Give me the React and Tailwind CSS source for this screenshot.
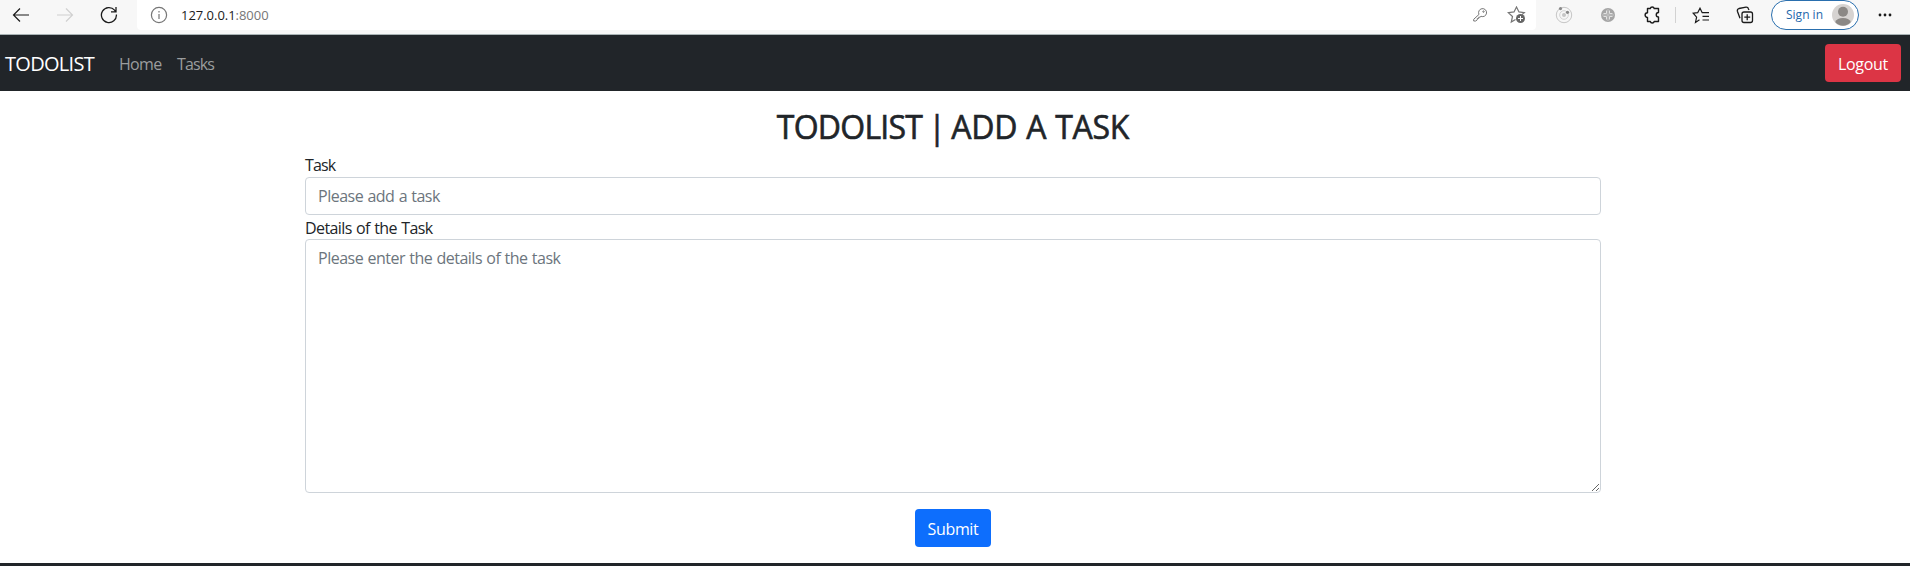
const svgProps = { fill: 'none', stroke: 'currentColor', strokeWidth: 1.2 };

function Slot({ children, className = '' }) {
  return <div className={`flex h-[30px] w-11 shrink-0 items-center justify-center ${className}`}>{children}</div>;
}

function BrowserBar() {
  return (
    <header className="flex h-[35px] w-full items-start border-b border-[#a9b3b5] bg-[#f7f7f7] text-[#1b1b1b]">
      <Slot className="-ml-px">
        <svg {...svgProps} width="18" height="16" viewBox="0 0 18 16"><path d="M17 8H1.5M8 1.5L1.5 8L8 14.5" /></svg>
      </Slot>
      <Slot className="text-[#d0d0d0]">
        <svg {...svgProps} width="18" height="16" viewBox="0 0 18 16"><path d="M1 8H16.5M10 1.5L16.5 8L10 14.5" /></svg>
      </Slot>
      <Slot>
        <svg {...svgProps} strokeWidth="1.3" width="18" height="18" viewBox="0 0 18 18"><path d="M16.4 8.5A7.5 7.5 0 1 1 14.6 4.2L16 5.6M16 1V5.8H11" /></svg>
      </Slot>
      <div className="ml-[6px] flex h-[30px] w-[1399px] shrink-0 items-center rounded-b-[4px] bg-white text-[#767676]">
        <svg {...svgProps} className="ml-[13px]" width="18" height="18" viewBox="0 0 18 18"><circle cx="9" cy="9" r="7.6" /><path d="M9 8V13M9 5V6.4" /></svg>
        <span className="ml-[13px] text-[13px] tracking-[-0.03px]"><span className="text-[#1b1b1b]">127.0.0.1</span>:8000</span>
        <svg {...svgProps} strokeWidth="1" className="ml-auto" width="16" height="16" viewBox="0 0 16 16"><path d="M7 7.4A4 4 0 1 1 9 9.3L8 10.2H6.7V11.5H5.3V12.8L3.7 14H1.7V12.3L7 7.4Z" /><circle cx="11.5" cy="4.6" r=".7" /></svg>
        <svg {...svgProps} className="ml-[19px] mr-[10px]" width="19" height="18" viewBox="0 0 19 18"><path d="M8.5 13.4L4.3 16L5.5 10.5L1.3 6.6L7 5.9L9.5 1L12 5.9L17.3 6.6L15 8.6" /><circle cx="13.5" cy="12.5" r="4.5" fill="#666" stroke="none" /><path stroke="#fff" strokeWidth="1" d="M13.5 10V15M11 12.5H16" /></svg>
      </div>
      <Slot className="ml-[6px]">
        <svg width="18" height="18" viewBox="0 0 18 18" fill="none" stroke="#c6c6c6"><circle cx="9" cy="9" r="7.7" /><circle cx="9" cy="9" r="4.3" stroke="#d4d4d4" /><circle cx="9" cy="9" r="2" fill="#c6c6c6" stroke="none" /><circle cx="5.5" cy="2.6" r="1.6" fill="#888" stroke="none" /><circle cx="12.5" cy="6.3" r="1.6" fill="#888" stroke="none" /></svg>
      </Slot>
      <Slot>
        <svg width="16" height="16" viewBox="0 0 16 16" fill="none"><circle cx="8" cy="8" r="7" fill="#a5a5a5" /><path d="M8 2V14M2 8H14" stroke="#c4c4c4" /><path d="M6.5 3.5V6.5H3.5M9.5 3.5V6.5H12.5M6.5 12.5V9.5H3.5M9.5 12.5V9.5H12.5" stroke="#e2e2e2" strokeWidth="1" /></svg>
      </Slot>
      <Slot>
        <svg {...svgProps} strokeWidth="1.4" strokeLinejoin="round" width="17" height="18" viewBox="0 0 17 18"><path d="M3.5 2.5H6.3A2 2 0 0 1 10.2 2.5H14.5V6.5A2 2 0 0 0 14.5 11V15.5H10.2A2 2 0 0 1 6.3 15.5H3.5V11.5A2.4 2.4 0 0 1 3.5 6.7Z" /></svg>
      </Slot>
      <div className="ml-px mt-[7px] h-4 w-px shrink-0 bg-[#d2d2d2]" />
      <Slot className="ml-[3px]">
        <svg {...svgProps} width="18" height="17" viewBox="0 0 18 17"><path d="M7.5 12.8L3.5 15.5L4.6 10.1L1.2 6.2L5.7 5.7L8 1.2L10.2 5.7H17M10.5 9.3H17M10.5 13H17" /></svg>
      </Slot>
      <Slot>
        <svg {...svgProps} strokeWidth="1.3" width="18" height="18" viewBox="0 0 18 18"><rect x="6" y="6" width="10.5" height="10.5" rx="2" /><path d="M11.2 8.3V14.2M8.3 11.2H14.2M4 12.3L1.4 5.2Q1 3.3 3 2.5L10 1.2Q12 1 12.5 3L13 4" /></svg>
      </Slot>
      <button className="ml-[4px] flex h-[30px] w-[88px] shrink-0 items-center justify-between rounded-full border border-[#2a6fae] bg-white pl-[14px] pr-[4px] text-[12px] text-[#1f68ac]">
        <span className="whitespace-nowrap">Sign in</span>
        <svg width="22" height="22" viewBox="0 0 22 22"><circle cx="11" cy="11" r="11" fill="#d6d3d1" /><circle cx="11" cy="7.8" r="5" fill="#8b8885" /><path d="M3.2 18Q5 14 11 14T18.8 18Q15.5 21.8 11 21.8T3.2 18Z" fill="#8b8885" /></svg>
      </button>
      <Slot className="ml-[4px]">
        <svg width="14" height="4" viewBox="0 0 14 4" fill="currentColor"><circle cx="2" cy="2" r="1.4" /><circle cx="7" cy="2" r="1.4" /><circle cx="12" cy="2" r="1.4" /></svg>
      </Slot>
    </header>
  );
}

export default function App() {
  return (
    <div className="flex h-[566px] w-full flex-col overflow-hidden bg-white font-['Open_Sans','Noto_Sans',sans-serif] text-[16px] leading-6 text-[#212529]">
      <BrowserBar />
      <nav className="flex h-14 shrink-0 items-center bg-[#212529] pl-[5px] pr-[9px] text-[#9b9d9e]">
        <a className="w-[114px] pt-px text-[20px] tracking-[-0.7px] text-white">TODOLIST</a>
        <a className="w-[58px] pt-px tracking-[-0.7px]">Home</a>
        <a className="pt-px tracking-[-0.9px]">Tasks</a>
        <button className="ml-auto h-[38px] w-[76px] rounded-[4px] bg-[#dc3545] pt-px tracking-[-0.3px] text-white">Logout</button>
      </nav>
      <main className="flex grow flex-col items-center pr-1">
        <h1 className="mt-[17px] h-[37px] text-[32px] font-medium leading-[38px] tracking-[-0.75px] whitespace-nowrap [-webkit-text-stroke:0.6px_#212529]"><span className="[word-spacing:-1.5px]">TODOLIST | </span><span className="tracking-[-0.25px] [word-spacing:1px]">ADD A TASK</span></h1>
        <form className="mt-[8px] flex w-[1296px] flex-col" onSubmit={(e) => e.preventDefault()}>
          <label className="h-6 tracking-[-0.9px]">Task</label>
          <input className="h-[38px] rounded-[4px] border border-[#ced4da] px-3 tracking-[-0.5px] [word-spacing:0.6px] placeholder:text-[#6c757d] placeholder:opacity-100" placeholder="Please add a task" />
          <label className="h-6 pt-px tracking-[-0.6px] [word-spacing:0.8px]">Details of the Task</label>
          <textarea className="h-[254px] resize-y rounded-[4px] border border-[#ced4da] px-3 py-1.5 tracking-[-0.5px] [word-spacing:0.6px] placeholder:text-[#6c757d] placeholder:opacity-100" placeholder="Please enter the details of the task" />
          <button className="mt-4 h-[38px] w-[76px] self-center rounded-[4px] bg-[#0d6efd] pt-px tracking-[-0.35px] text-white">Submit</button>
        </form>
      </main>
      <footer className="h-[3px] shrink-0 bg-[#212529]" />
    </div>
  );
}
